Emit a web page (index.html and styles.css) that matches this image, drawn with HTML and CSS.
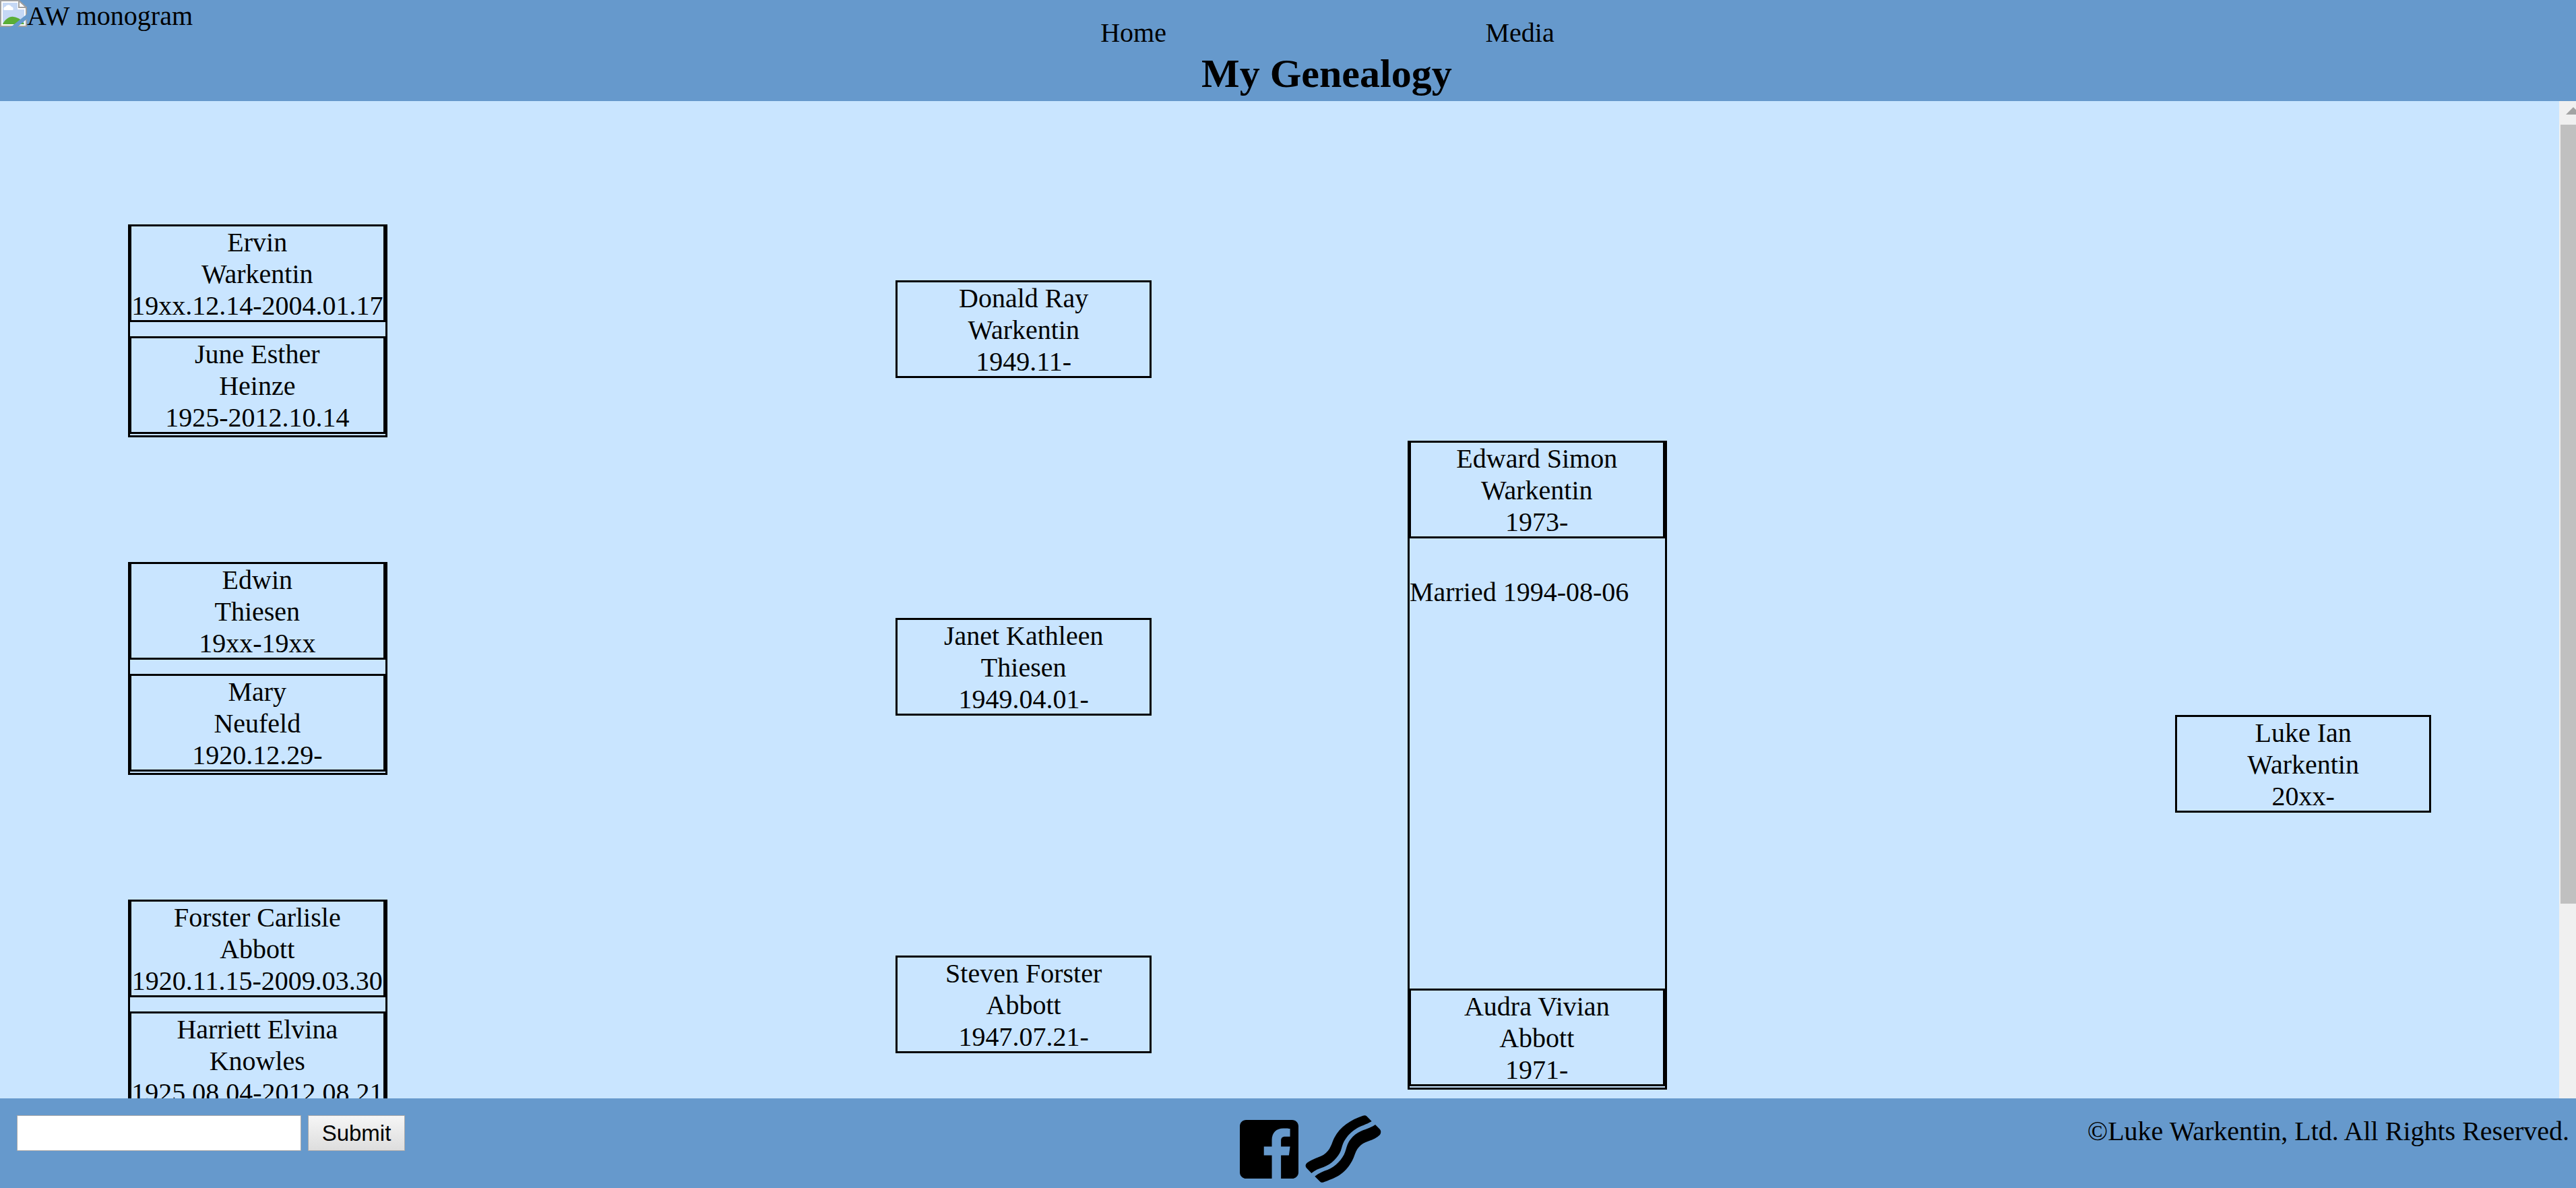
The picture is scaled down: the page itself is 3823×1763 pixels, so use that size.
FILE: index.html
```
<!DOCTYPE html>
<html lang="en">
<head>
<meta charset="utf-8">
<title>My Genealogy</title>
<link rel="stylesheet" href="styles.css">
</head>
<body>
<header class="site-header">
  <div class="logo">
    <svg class="logo-icon" viewBox="0 0 40 40" aria-hidden="true">
      <path fill="#fff" stroke="#a0a0a0" stroke-width="2" d="M1 1H28L39 12V39H1Z"/>
      <path fill="#c5d8f5" d="M4 4H26V14H36V36H4Z"/>
      <path fill="#fff" d="M6 15a3 3 0 0 1 2-5a5 5 0 0 1 9 0a3 3 0 0 1 2 5Z"/>
      <path fill="#5aae37" d="M4 36C8 28 14 24 20 25C28 26 34 31 36 36Z"/>
      <path fill="#fff" stroke="#a0a0a0" stroke-width="2" d="M28 1V11H39Z"/>
      <path fill="#6699cc" d="M40 21V28L26 40H16Z"/>
      <path fill="#6699cc" d="M30 0H40V10Z"/>
    </svg><span>AW monogram</span>
  </div>
  <div class="banner">
    <nav class="site-nav">
      <a href="#home">Home</a>
      <a href="#media">Media</a>
    </nav>
    <h1>My Genealogy</h1>
  </div>
</header>

<div class="viewport">
  <main class="tree">
    <section class="generation grandparents">
      <div class="couple">
        <div class="person">Ervin<br>Warkentin<br>19xx.12.14-2004.01.17</div>
        <div class="person">June Esther<br>Heinze<br>1925-2012.10.14</div>
      </div>
      <div class="couple">
        <div class="person">Edwin<br>Thiesen<br>19xx-19xx</div>
        <div class="person">Mary<br>Neufeld<br>1920.12.29-</div>
      </div>
      <div class="couple">
        <div class="person">Forster Carlisle<br>Abbott<br>1920.11.15-2009.03.30</div>
        <div class="person">Harriett Elvina<br>Knowles<br>1925.08.04-2012.08.21</div>
      </div>
    </section>
    <section class="generation parents">
      <div class="person">Donald Ray<br>Warkentin<br>1949.11-</div>
      <div class="person">Janet Kathleen<br>Thiesen<br>1949.04.01-</div>
      <div class="person">Steven Forster<br>Abbott<br>1947.07.21-</div>
    </section>
    <section class="generation married">
      <div class="couple">
        <div class="person">Edward Simon<br>Warkentin<br>1973-</div>
        <p class="marriage">Married 1994-08-06</p>
        <div class="person">Audra Vivian<br>Abbott<br>1971-</div>
      </div>
    </section>
    <section class="generation children">
      <div class="person">Luke Ian<br>Warkentin<br>20xx-</div>
    </section>
  </main>
  <div class="scrollbar" aria-hidden="true">
    <svg class="scroll-up" viewBox="0 0 42 35"><path fill="#a3a3a3" d="M21 9L32 20H10Z"/></svg>
    <div class="scroll-track"><div class="scroll-thumb"></div></div>
  </div>
</div>

<footer class="site-footer">
  <form class="signup">
    <input type="text" aria-label="Email">
    <button type="button">Submit</button>
  </form>
  <div class="social">
    <a href="#facebook" aria-label="Facebook">
      <svg class="facebook" viewBox="0 32 448 448"><path d="M448 80v352c0 26.500-21.500 48-48 48h-85.300V302.800h60.600l8.700-67.600h-69.300V192c0-19.600 5.400-32.900 33.500-32.900H384V98.700c-6.200-.8-27.400-2.700-52.200-2.700-51.600 0-87 31.500-87 89.400v49.900H184v67.500h60.900V480H48c-26.500 0-48-21.500-48-48V80c0-26.500 21.500-48 48-48h352c26.500 0 48 21.500 48 48z"/></svg>
    </a>
    <a href="#bacon" aria-label="Bacon">
      <svg class="bacon" viewBox="413 103 338 301">
        <path d="M709 130L686 107Q680 101 670 105C616 123 567 154 542 204C530 228 526 260 494 280C472 293 444 298 420 316Q409 326 417 338L440 362C456 349 474 341 494 335C530 322 560 290 571 262C577 245 579 226 596 204C636 151 674 152 709 130Z"/>
        <path d="M725 145L746 166Q754 177 746 190C722 215 684 218 661 236C631 262 638 285 613 321C578 374 542 383 495 402Q486 406 479 400L455 376C472 362 492 354 512 347C547 334 579 299 590 268C597 249 599 230 614 211C650 165 690 170 725 145Z"/>
      </svg>
    </a>
  </div>
  <p class="copyright">©Luke Warkentin, Ltd. All Rights Reserved.</p>
</footer>
</body>
</html>
```

FILE: styles.css
```
* {
  box-sizing: border-box;
}

body {
  display: flex;
  flex-direction: column;
  height: 100vh;
  margin: 0;
  background: #c9e5ff;
  color: #000;
  font: 40px/47px "Liberation Serif", "Times New Roman", serif;
}

a {
  color: inherit;
  text-decoration: none;
}

/* Header */
.site-header {
  display: grid;
  grid-template-columns: 3% 1fr;
  background: #6699cc;
}

.logo {
  display: flex;
  white-space: nowrap;
}

.logo-icon {
  flex: none;
  width: 40px;
  height: 40px;
}

.banner {
  padding: 25px 0 3px;
  text-align: center;
}

.site-nav {
  display: flex;
  justify-content: center;
}

.site-nav a {
  width: 15vw;
}

h1 {
  margin: 0;
  font-size: 60px;
  line-height: 75px;
}

/* Family tree */
.viewport {
  display: flex;
  flex: 1;
  min-height: 0;
}

.tree {
  display: grid;
  flex: 1;
  grid-template-columns: 5% 10% 20% 10% 10% 10% 20% 10% 5%;
  align-items: start;
  padding-bottom: 120px;
  overflow-y: auto;
  scrollbar-width: none;
}

.generation {
  display: flex;
  flex-direction: column;
}

.grandparents {
  grid-column: 2;
  gap: 185px;
  padding-top: 183px;
}

.parents {
  grid-column: 4;
  gap: 356px;
  padding-top: 266px;
}

.married {
  grid-column: 6;
  padding-top: 504px;
}

.children {
  grid-column: 8;
  padding-top: 911px;
}

.person {
  height: 145px;
  border: 3px solid #000;
  text-align: center;
  white-space: nowrap;
}

.couple {
  display: flex;
  flex-direction: column;
  gap: 21px;
  width: calc(100% + 5px);
  padding-bottom: 2px;
  border: 3px solid #000;
}

.couple .person {
  width: calc(100% + 1px);
  margin-left: -1px;
}

.couple .person:first-child {
  margin-top: -3px;
}

.married .couple {
  gap: 0;
}

.marriage {
  min-height: 612px;
  margin: 56px 0 0;
}

/* Scrollbar */
.scrollbar {
  display: flex;
  flex-direction: column;
  width: 25px;
  overflow: hidden;
  background: #f0f0f0;
}

.scroll-up {
  flex: none;
  width: 42px;
  height: 35px;
}

.scroll-track {
  flex: 1;
  padding-left: 2px;
}

.scroll-thumb {
  height: 80%;
  background: #c0c0c0;
}

/* Footer */
.site-footer {
  display: grid;
  grid-template-columns: 48% auto 1fr;
  column-gap: 10px;
  padding: 25px 10px 8px 0;
  background: #6699cc;
}

.signup {
  display: flex;
  gap: 10px;
  align-items: flex-start;
  padding-left: 25px;
}

.signup input,
.signup button {
  height: 53px;
  border: 1px solid #a9a9a9;
  border-radius: 0;
  font: 33px "Liberation Sans", Arial, sans-serif;
}

.signup input {
  width: 422px;
  background: #fff;
}

.signup button {
  width: 144px;
  padding: 0;
  background: linear-gradient(#f6f6f6, #dddddd);
  color: #000;
}

.social {
  display: flex;
  gap: 10px;
  align-items: center;
}

.social svg {
  display: block;
}

.facebook {
  width: 87px;
  height: 87px;
}

.bacon {
  width: 113px;
  height: 100px;
}

.copyright {
  margin: 0;
  text-align: right;
}
```
